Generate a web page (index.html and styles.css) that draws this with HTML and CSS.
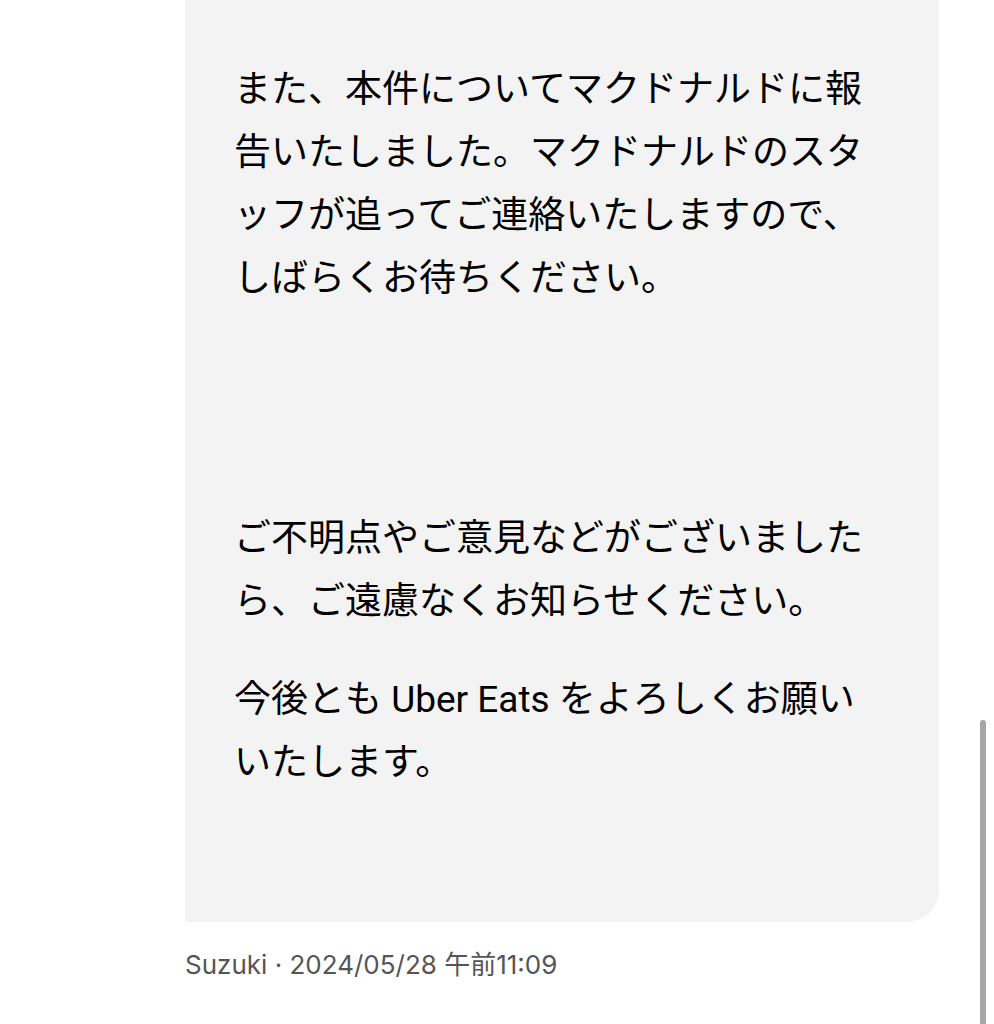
FILE: index.html
```
<!DOCTYPE html>
<html>
<head>
    <meta charset="utf-8" />
    <title>Uber Eats サポート</title>
    <link rel="stylesheet" href="styles.css">
</head>
<body>
    <div class="thread">
        <div class="bubble">
            <p>また、本件についてマクドナルドに報告いたしました。マクドナルドのスタッフが追ってご連絡いたしますので、しばらくお待ちください。</p>
            <p class="blank"></p>
            <p>ご不明点やご意見などがございましたら、ご遠慮なくお知らせください。</p>
            <p>今後とも Uber Eats をよろしくお願いいたします。</p>
        </div>
        <div class="meta">Suzuki · 2024/05/28 午前11:09</div>
    </div>
    <div class="scrollbar"></div>
</body>
</html>
```

FILE: styles.css
```
html, body {
    margin: 0;
    background: #fff;
}

body {
    font-family: "Inter", "Noto Sans CJK JP", sans-serif;
    color: #000;
    overflow: hidden;
    height: 1024px;
}

.thread {
    padding-left: 185px;
    width: 754px;
}

.bubble {
    background: #f3f3f3;
    border-radius: 0 0 32px 0;
    padding: 58px 55px 128px 49px;
    font-family: "Roboto", "Noto Sans CJK JP", sans-serif;
    font-size: 37px;
    line-height: 63px;
}

    .bubble p {
        margin: 0 0 35px;
    }

    .bubble p:last-child {
        margin-bottom: 0;
    }

    .bubble .blank {
        height: 127px;
    }

.meta {
    margin-top: 27px;
    font-size: 26px;
    line-height: 32px;
    color: #555;
}

.scrollbar {
    position: fixed;
    left: 980px;
    top: 720px;
    width: 6px;
    bottom: 0;
    background: #a6a6a6;
    border-radius: 3px 3px 0 0;
}
```
